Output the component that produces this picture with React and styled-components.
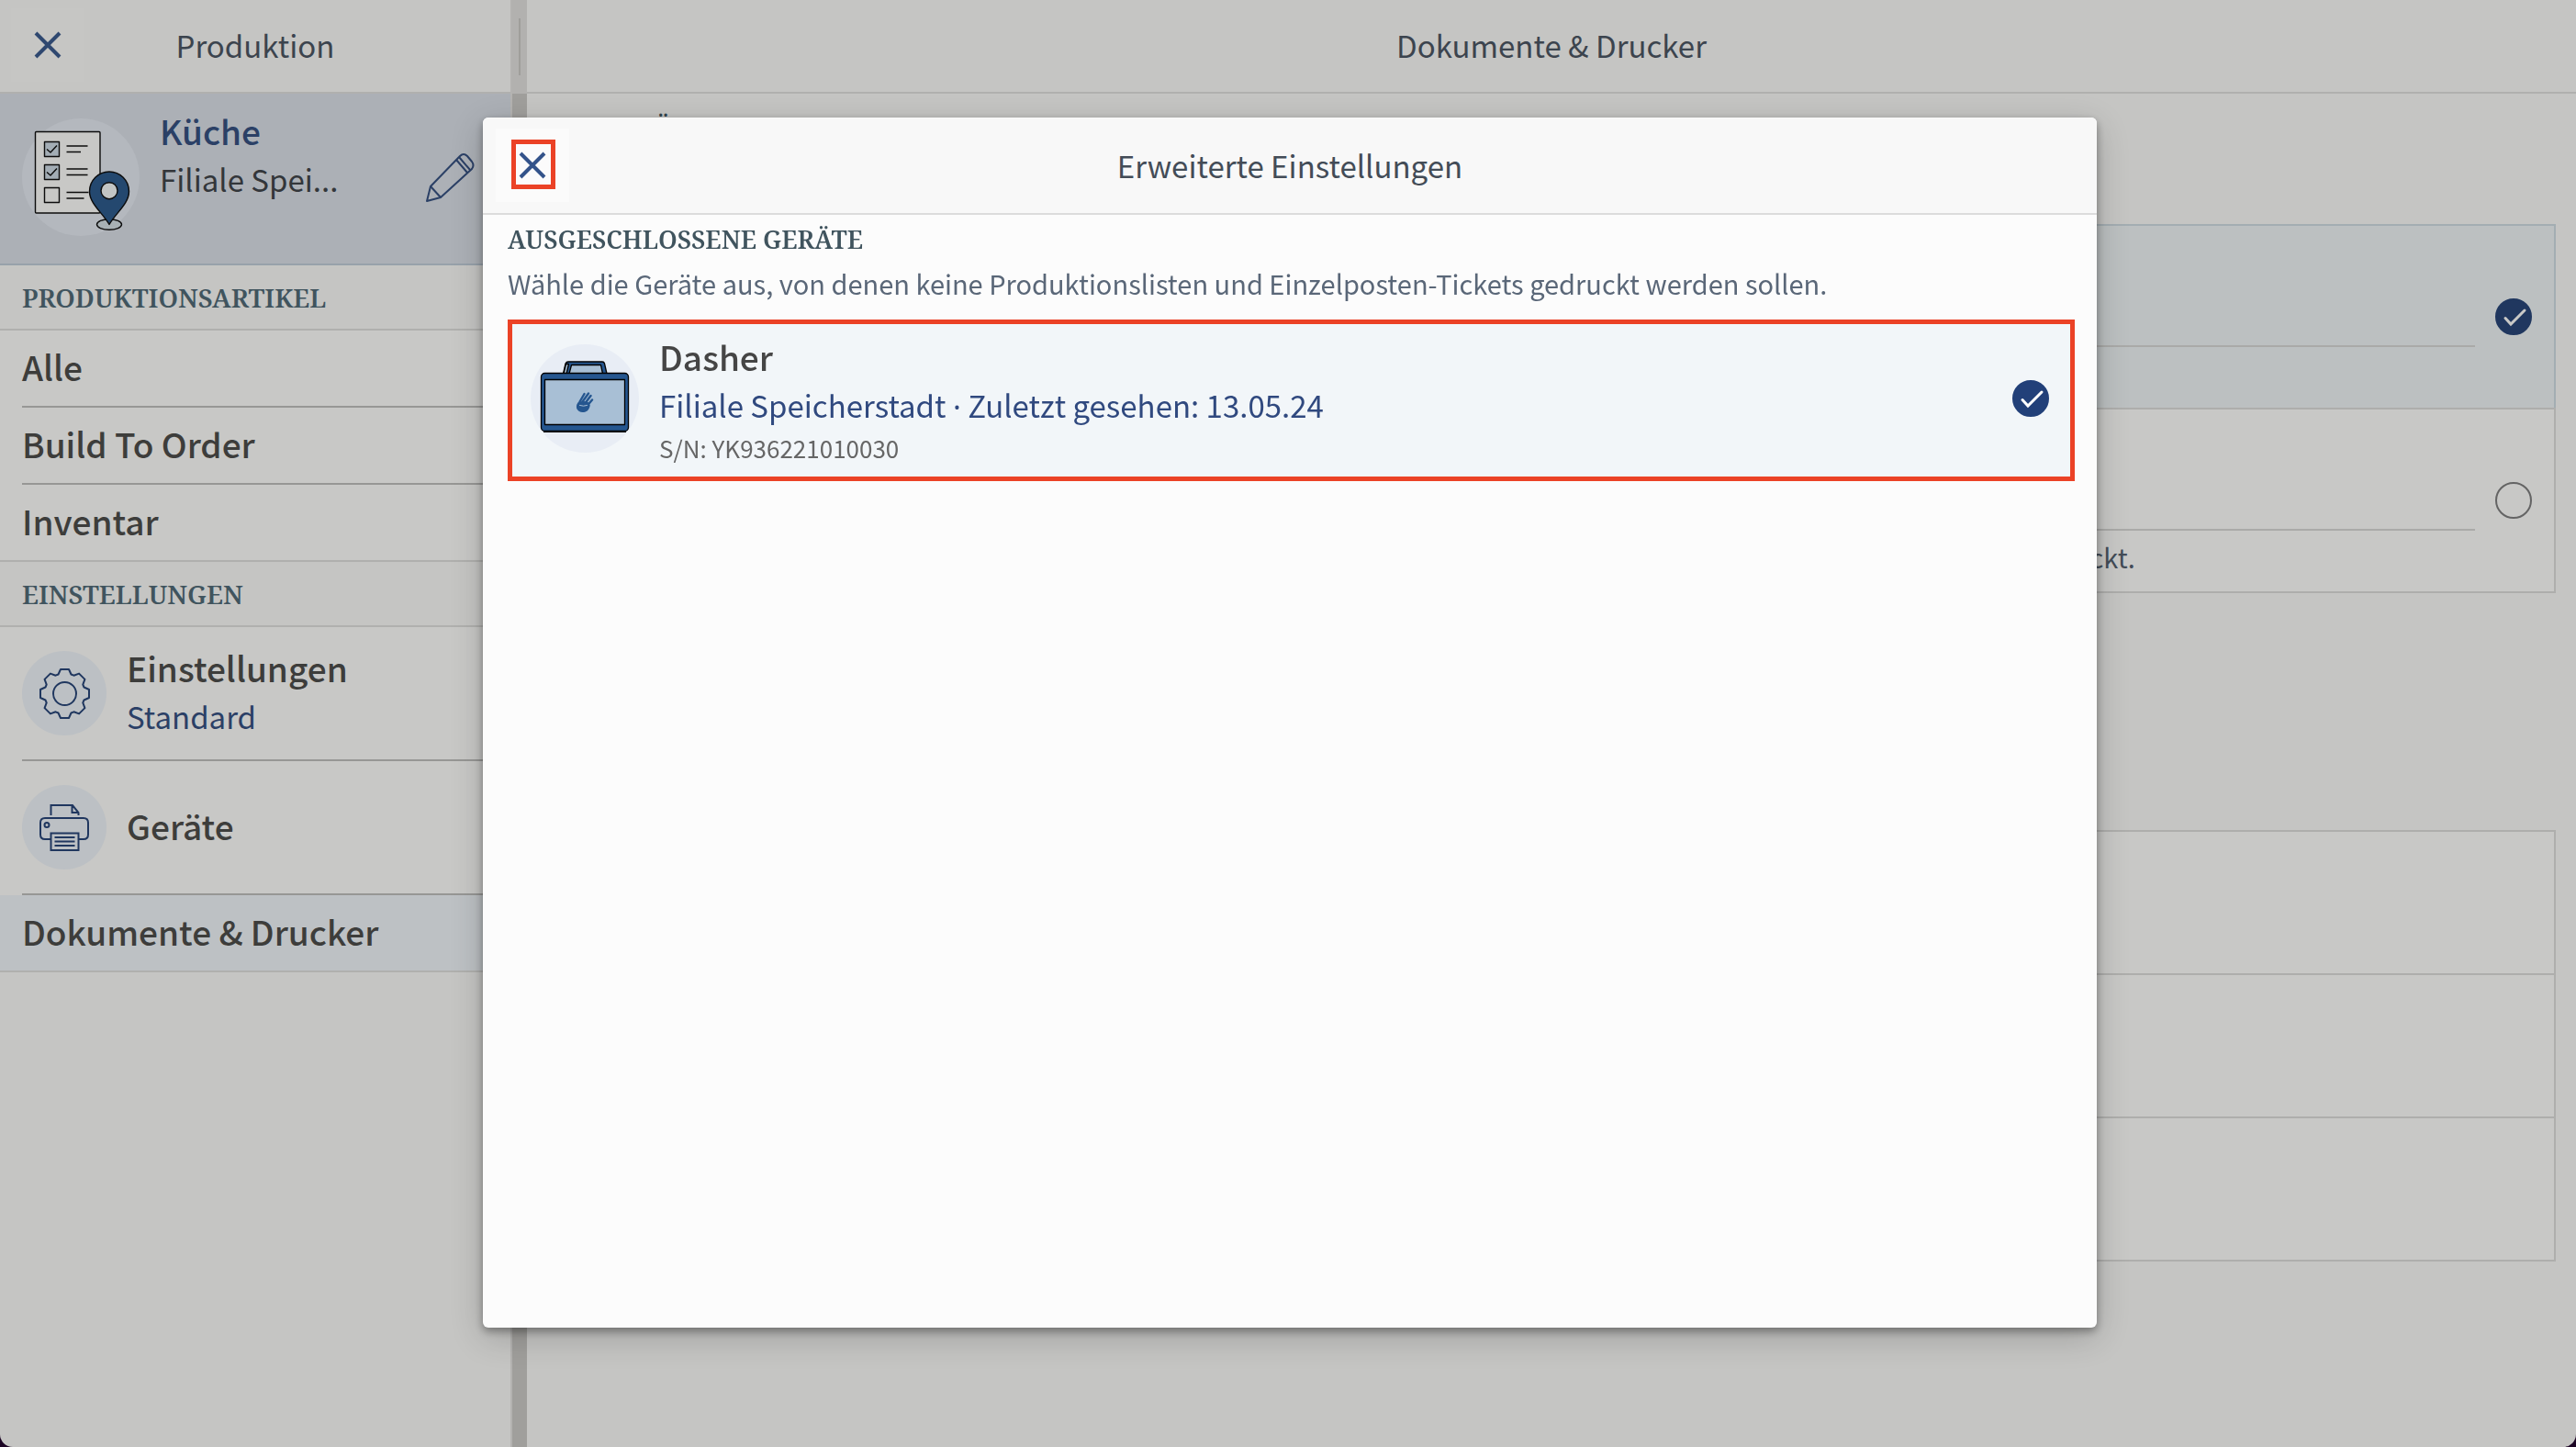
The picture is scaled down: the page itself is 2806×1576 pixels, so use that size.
import React from "react"
import styled, { createGlobalStyle } from "styled-components"

const Fonts = {
  body: `"Noto Sans CJK SC", "Noto Sans", sans-serif`,
  latin: `"Noto Sans", sans-serif`,
  heading: `"Noto Serif", "Liberation Serif", serif`,
}

const articles = ["Alle", "Build To Order", "Inventar"]

const App = () => (
  <>
    <GlobalStyle />
    <Shell>
      <Sidebar>
        <Bar>
          <CloseButton type="button" aria-label="Schließen">
            <CloseIcon />
          </CloseButton>
          <BarTitle>Produktion</BarTitle>
        </Bar>
        <Station>
          <Avatar $size={128} $color="#b4b8be">
            <StationIcon />
          </Avatar>
          <StationText>
            <StationName>Küche</StationName>
            <StationBranch>Filiale Spei...</StationBranch>
          </StationText>
          <EditButton type="button" aria-label="Bearbeiten">
            <PencilIcon />
          </EditButton>
        </Station>
        <SectionTitle>PRODUKTIONSARTIKEL</SectionTitle>
        <NavList>
          {articles.map(name => (
            <NavItem key={name}>
              <NavLink href="#">
                <NavText>
                  <ItemTitle>{name}</ItemTitle>
                </NavText>
              </NavLink>
            </NavItem>
          ))}
        </NavList>
        <SectionTitle>EINSTELLUNGEN</SectionTitle>
        <NavList>
          <NavItem>
            <NavLink href="#" $tall>
              <Avatar $size={92} $color="#bcc0c4">
                <GearIcon />
              </Avatar>
              <NavText>
                <ItemTitle>Einstellungen</ItemTitle>
                <ItemSubtitle $color="#2b4066">Standard</ItemSubtitle>
              </NavText>
            </NavLink>
          </NavItem>
          <NavItem>
            <NavLink href="#" $tall>
              <Avatar $size={92} $color="#bcc0c4">
                <PrinterIcon />
              </Avatar>
              <NavText>
                <ItemTitle>Geräte</ItemTitle>
              </NavText>
            </NavLink>
          </NavItem>
          <NavItem $active>
            <NavLink href="#" aria-current="page">
              <NavText>
                <ItemTitle>Dokumente & Drucker</ItemTitle>
              </NavText>
            </NavLink>
          </NavItem>
        </NavList>
      </Sidebar>
      <Splitter>
        <SplitterTop>
          <Grip />
        </SplitterTop>
      </Splitter>
      <Main>
        <Bar>
          <BarTitle>Dokumente & Drucker</BarTitle>
        </Bar>
        <Content>
          <ContentTitle>BELEG FÜR</ContentTitle>
          <Options>
            <Option $active>
              <OptionBody>
                <OptionHead />
                <OptionHint />
              </OptionBody>
              <Check type="radio" name="print" label="Automatisch" color="#20375f" tick="#c9c9c7" checked />
            </Option>
            <Option>
              <OptionBody>
                <OptionHead />
                <OptionHint>
                  Produktionslisten und Einzelposten-Tickets werden nach dem
                  Abschließen einer Bestellung automatisch am Drucker gedruckt.
                </OptionHint>
              </OptionBody>
              <Check type="radio" name="print" label="Manuell" color="#20375f" tick="#c9c9c7" />
            </Option>
          </Options>
          <Rows>
            <Row />
            <Row />
            <Row />
          </Rows>
        </Content>
      </Main>
    </Shell>
    <Overlay>
      <Modal role="dialog" aria-labelledby="modal-title">
        <ModalHeader>
          <CloseButton type="button" aria-label="Schließen" $light>
            <CloseIcon />
            <Marker />
          </CloseButton>
          <ModalTitle id="modal-title">Erweiterte Einstellungen</ModalTitle>
        </ModalHeader>
        <ModalBody>
          <ModalSection>AUSGESCHLOSSENE GERÄTE</ModalSection>
          <ModalHint>
            Wähle die Geräte aus, von denen keine Produktionslisten und
            Einzelposten-Tickets gedruckt werden sollen.
          </ModalHint>
          <Device htmlFor="dasher">
            <Avatar $size={118} $color="#e8edf5">
              <DeviceIcon />
            </Avatar>
            <DeviceText>
              <DeviceName>Dasher</DeviceName>
              <ItemSubtitle $color="#30497f">
                Filiale Speicherstadt <Dot>·</Dot> Zuletzt gesehen: 13.05.24
              </ItemSubtitle>
              <Serial>S/N: YK936221010030</Serial>
            </DeviceText>
            <Check type="checkbox" id="dasher" color="#224079" tick="#ffffff" checked />
          </Device>
        </ModalBody>
      </Modal>
    </Overlay>
  </>
)

const Check = ({ type, id, name, label, color, tick, checked }) => (
  <CheckWrapper>
    <CheckInput
      type={type}
      id={id}
      name={name}
      aria-label={label}
      defaultChecked={checked}
      $color={color}
    />
    {checked && (
      <CheckMark viewBox="0 0 40 40" stroke={tick}>
        <path d="M11 21.5l6 6.5 15-15" />
      </CheckMark>
    )}
  </CheckWrapper>
)

const CloseIcon = () => (
  <svg width="30" height="30" viewBox="0 0 30 30" fill="none" stroke="currentColor" strokeWidth="4">
    <path d="M2 2l26 26M28 2L2 28" />
  </svg>
)

const PencilIcon = () => (
  <svg width="56" height="56" viewBox="0 0 56 56" fill="none" stroke="#2b4066" strokeWidth="2" strokeLinejoin="round">
    <path d="M3 54l4-16L39 5q4-4 8 0l5 6q3 4 0 8L18 50z" />
    <path d="M7 38l11 12M35 9l12 14M38 6l12 14" />
  </svg>
)

const StationIcon = () => (
  <svg width="128" height="128" viewBox="0 0 128 128" fill="none" stroke="#0c0c0c" strokeWidth="1.4" strokeLinejoin="round">
    <rect x="14.5" y="14.5" width="70.5" height="88.5" rx="1" fill="#c8c8c6" />
    <path d="M24.5 25.5h16v16h-16zM24.5 50.5h16v16h-16z" fill="#a3adb5" />
    <path d="M24.5 75.5h16v16h-16z" />
    <path d="M27 33.5l4 3.5 7-7.5M27 58.5l4 3.5 7-7.5" />
    <path d="M48.5 30h23M48.5 36.5h15.5M48.5 55h23M48.5 61.5h23M48.5 80.5h24M48.5 87h19" />
    <ellipse cx="95" cy="115.5" rx="13.5" ry="5.8" fill="#a8b1b5" />
    <path
      d="M95 115.5C88 103 73.5 93 73.5 79.5a21.5 21.5 0 0 1 43 0C116.5 93 102 103 95 115.5z"
      fill="#24486f"
    />
    <circle cx="95" cy="78.7" r="9" fill="#c2c5c4" />
  </svg>
)

// one tooth, turned eight times around the hub
const tooth = [[-7, -21], [-4.5, -26.5], [4.5, -26.5], [7, -21]]
const gearPoints = [0, 1, 2, 3, 4, 5, 6, 7]
  .flatMap(n => {
    const a = (n * Math.PI) / 4
    return tooth.map(([x, y]) => [
      27.5 + x * Math.cos(a) - y * Math.sin(a),
      27.5 + x * Math.sin(a) + y * Math.cos(a),
    ])
  })
  .map(([x, y]) => `${x.toFixed(1)},${y.toFixed(1)}`)
  .join(" ")

const GearIcon = () => (
  <svg width="55" height="55" viewBox="0 0 55 55" fill="none" stroke="#20375f" strokeWidth="2" strokeLinejoin="round">
    <polygon points={gearPoints} />
    <circle cx="27.5" cy="27.5" r="12.5" />
  </svg>
)

const PrinterIcon = () => (
  <svg width="54" height="54" viewBox="0 0 54 54" fill="none" stroke="#20375f" strokeWidth="2">
    <path d="M12.5 14V3H36l6.5 8V14M35.5 3v8h7" />
    <path d="M12 40H6q-5 0-5-5V22q0-5 5-5h42q5 0 5 5v13q0 5-5 5h-6" />
    <path d="M12.5 33.5h30V52h-30zM16.5 38h22M16.5 42.5h22M16.5 47h22" />
    <circle cx="8" cy="24.5" r="2.5" />
  </svg>
)

const DeviceIcon = () => (
  <svg width="118" height="118" viewBox="0 0 118 118" fill="none" stroke="#000000" strokeWidth="1.3" strokeLinejoin="round">
    <path d="M35.5 32L38 21q1-2 3-2h37q2 0 2.5 2L83 32z" fill="#25568f" />
    <path d="M36 32l2.5-10.5h3L39 32z" fill="#a8bfd5" />
    <path d="M42 32l2.5-9.5h32L78.5 32z" fill="#a8bfd5" />
    <rect x="11.5" y="31.5" width="95" height="63" rx="4" fill="#25568f" />
    <path d="M14 95h90" strokeWidth="2" />
    <rect x="15.5" y="38.5" width="87" height="49" fill="#a8bfd5" />
    <g stroke="#25568f" strokeWidth="2.4" strokeLinecap="round">
      <path d="M53.5 62.5l5-8.5M56.5 62.5l6.5-9M59.5 64l6-8M62 66.5l5-6" />
      <path
        d="M52 64q5-2 10-.5l2 3q-1 5-5 6.5-6 1-8-3-1-3 1-6z"
        fill="#25568f"
        strokeWidth="1.5"
      />
      <path d="M53.5 66.5q4 1.5 8 0" stroke="#a8bfd5" strokeWidth="1" />
    </g>
  </svg>
)

const GlobalStyle = createGlobalStyle`
  * {
    box-sizing: border-box;
  }

  body {
    margin: 0;
    background-color: #1c0524;
    font-family: ${Fonts.body};
  }

  h1, h2, h3, p, ul {
    margin: 0;
    padding: 0;
  }
`

const Shell = styled.div`
  display: flex;
  min-height: 100vh;
  background-color: #c5c5c3;
  border-radius: 0 0 14px 14px;
  overflow: hidden;
`

const Sidebar = styled.aside`
  width: 556px;
  flex-shrink: 0;
`

const Bar = styled.header`
  position: relative;
  display: flex;
  align-items: center;
  justify-content: center;
  height: 102px;
  padding-bottom: 2px;
  border-bottom: 2px solid #b0b0ae;
`

const BarTitle = styled.h1`
  color: #3c444e;
  font-size: 33px;
  font-weight: 400;
  line-height: 52px;
`

const CloseButton = styled.button`
  position: absolute;
  left: ${props => (props.$light ? "14px" : "12px")};
  display: flex;
  align-items: center;
  justify-content: center;
  width: 80px;
  height: 80px;
  padding: 0;
  border: none;
  color: ${props => (props.$light ? "#33538a" : "#2f4870")};
  background-color: ${props => (props.$light ? "#fbfbfb" : "#c6c6c4")};
  cursor: pointer;
`

const Marker = styled.span`
  position: absolute;
  top: 12px;
  left: 17px;
  width: 48px;
  height: 54px;
  border: 5px solid #eb4226;
`

const Station = styled.div`
  display: flex;
  align-items: center;
  height: 187px;
  padding: 0 38px 4px 24px;
  background-color: #acb0b6;
  border-bottom: 2px solid #97a1aa;
`

const Avatar = styled.div`
  display: flex;
  align-items: center;
  justify-content: center;
  flex-shrink: 0;
  width: ${props => props.$size}px;
  height: ${props => props.$size}px;
  border-radius: 50%;
  background-color: ${props => props.$color};
`

const StationText = styled.div`
  align-self: flex-start;
  flex: 1;
  min-width: 0;
  padding: 13px 0 0 22px;
`

const StationName = styled.h2`
  color: #2b4066;
  font-size: 37px;
  font-weight: 500;
  line-height: 54px;
`

const StationBranch = styled.p`
  color: #33363a;
  font-size: 33px;
  line-height: 52px;
`

const EditButton = styled.button`
  display: flex;
  padding: 0;
  border: none;
  background: none;
  cursor: pointer;
`

const SectionTitle = styled.h3`
  padding: 1px 0 0 24px;
  color: #40545e;
  font-family: ${Fonts.heading};
  font-size: 28px;
  font-weight: 600;
  line-height: 68px;
  border-bottom: 2px solid #b0b0ae;
`

const NavList = styled.ul`
  list-style: none;
  background-color: #c8c8c6;
  border-bottom: 2px solid #b0b0ae;
`

const NavItem = styled.li`
  padding-left: 24px;
  background-color: ${props => (props.$active ? "#bdc1c4" : "transparent")};
`

const NavLink = styled.a`
  display: flex;
  align-items: center;
  gap: 22px;
  height: ${props => (props.$tall ? "146px" : "84px")};
  text-decoration: none;
  border-bottom: 2px solid #979795;

  li:last-child > & {
    height: 82px;
    border-bottom: none;
  }
`

const NavText = styled.span`
  display: flex;
  flex-direction: column;
  padding-bottom: 4px;
`

const ItemTitle = styled.span`
  color: #3d3d3b;
  font-size: 37px;
  font-weight: 500;
  line-height: 54px;
`

const ItemSubtitle = styled.span`
  color: ${props => props.$color};
  font-size: 33px;
  line-height: 52px;
`

// the CJK font draws the middle dot full width
const Dot = styled.span`
  font-family: ${Fonts.latin};
`

const Splitter = styled.div`
  width: 18px;
  flex-shrink: 0;
  background-color: #a09f9c;
  border-left: 2px solid #b4b3b1;
`

const SplitterTop = styled.div`
  display: flex;
  align-items: center;
  justify-content: center;
  height: 102px;
  background-color: #b2b1af;
`

const Grip = styled.div`
  width: 2px;
  height: 62px;
  background-color: #9f9e9b;
`

const Main = styled.main`
  flex: 1;
  min-width: 0;
`

const Content = styled.div`
  padding: 10px 22px 0 24px;
`

const ContentTitle = styled.h2`
  height: 132px;
  color: #33454f;
  font-family: ${Fonts.heading};
  font-size: 27px;
  font-weight: 600;
  line-height: 54px;
`

const Options = styled.div`
  margin-bottom: 258px;
`

const Option = styled.div`
  display: flex;
  align-items: center;
  gap: 22px;
  height: 202px;
  padding: 0 24px;
  border: 2px solid ${props => (props.$active ? "#a3adb2" : "#aeaeac")};
  background-color: ${props => (props.$active ? "#bcc0c1" : "#c8c8c6")};

  & + & {
    margin-top: -2px;
  }
`

const OptionBody = styled.div`
  flex: 1;
  min-width: 0;
`

const OptionHead = styled.div`
  height: 132px;
  border-bottom: 2px solid #aaaaa8;
`

const OptionHint = styled.p`
  height: 66px;
  color: #434c57;
  font-size: 29px;
  line-height: 56px;
`

const Rows = styled.div`
  display: flex;
  flex-direction: column;
`

const Row = styled.div`
  height: 158px;
  border: 2px solid #aeaeac;
  background-color: #c8c8c6;

  & + & {
    margin-top: -2px;
  }
`

const Overlay = styled.div`
  position: fixed;
  inset: 0;
  display: flex;
  padding: 128px 522px 130px 526px;
`

const Modal = styled.section`
  flex: 1;
  min-width: 0;
  overflow: hidden;
  border-radius: 6px;
  background-color: #fcfcfc;
  box-shadow: 0 4px 10px rgba(0, 0, 0, 0.35), 0 10px 36px rgba(0, 0, 0, 0.2);
`

const ModalHeader = styled.header`
  position: relative;
  display: flex;
  align-items: center;
  justify-content: center;
  height: 106px;
  background-color: #f8f8f8;
  border-bottom: 2px solid #dcdcdc;
`

const ModalTitle = styled(BarTitle)`
  color: #434c57;
`

const ModalBody = styled.div`
  padding: 0 24px 0 27px;
`

const ModalSection = styled.h2`
  color: #40545e;
  font-family: ${Fonts.heading};
  font-size: 27px;
  font-weight: 600;
  line-height: 54px;
`

const ModalHint = styled.p`
  margin-bottom: 20px;
  color: #5a6778;
  font-size: 29px;
  line-height: 40px;
`

const Device = styled.label`
  display: flex;
  align-items: center;
  height: 176px;
  padding: 0 23px 4px 20px;
  border: 5px solid #eb4226;
  background-color: #f2f6f9;
  cursor: pointer;
`

const DeviceText = styled.span`
  display: flex;
  flex: 1;
  flex-direction: column;
  padding-left: 22px;
`

const DeviceName = styled(ItemTitle)`
  color: #454545;
`

const Serial = styled.span`
  color: #666666;
  font-size: 26px;
  line-height: 38px;
`

const CheckWrapper = styled.span`
  position: relative;
  display: flex;
  flex-shrink: 0;
`

const CheckInput = styled.input`
  width: 40px;
  height: 40px;
  margin: 0;
  appearance: none;
  border: 2px solid #646464;
  border-radius: 50%;

  &:checked {
    border-color: ${props => props.$color};
    background-color: ${props => props.$color};
  }
`

const CheckMark = styled.svg`
  position: absolute;
  inset: 0;
  fill: none;
  stroke-width: 3;
  stroke-linecap: round;
  pointer-events: none;
`

export default App
